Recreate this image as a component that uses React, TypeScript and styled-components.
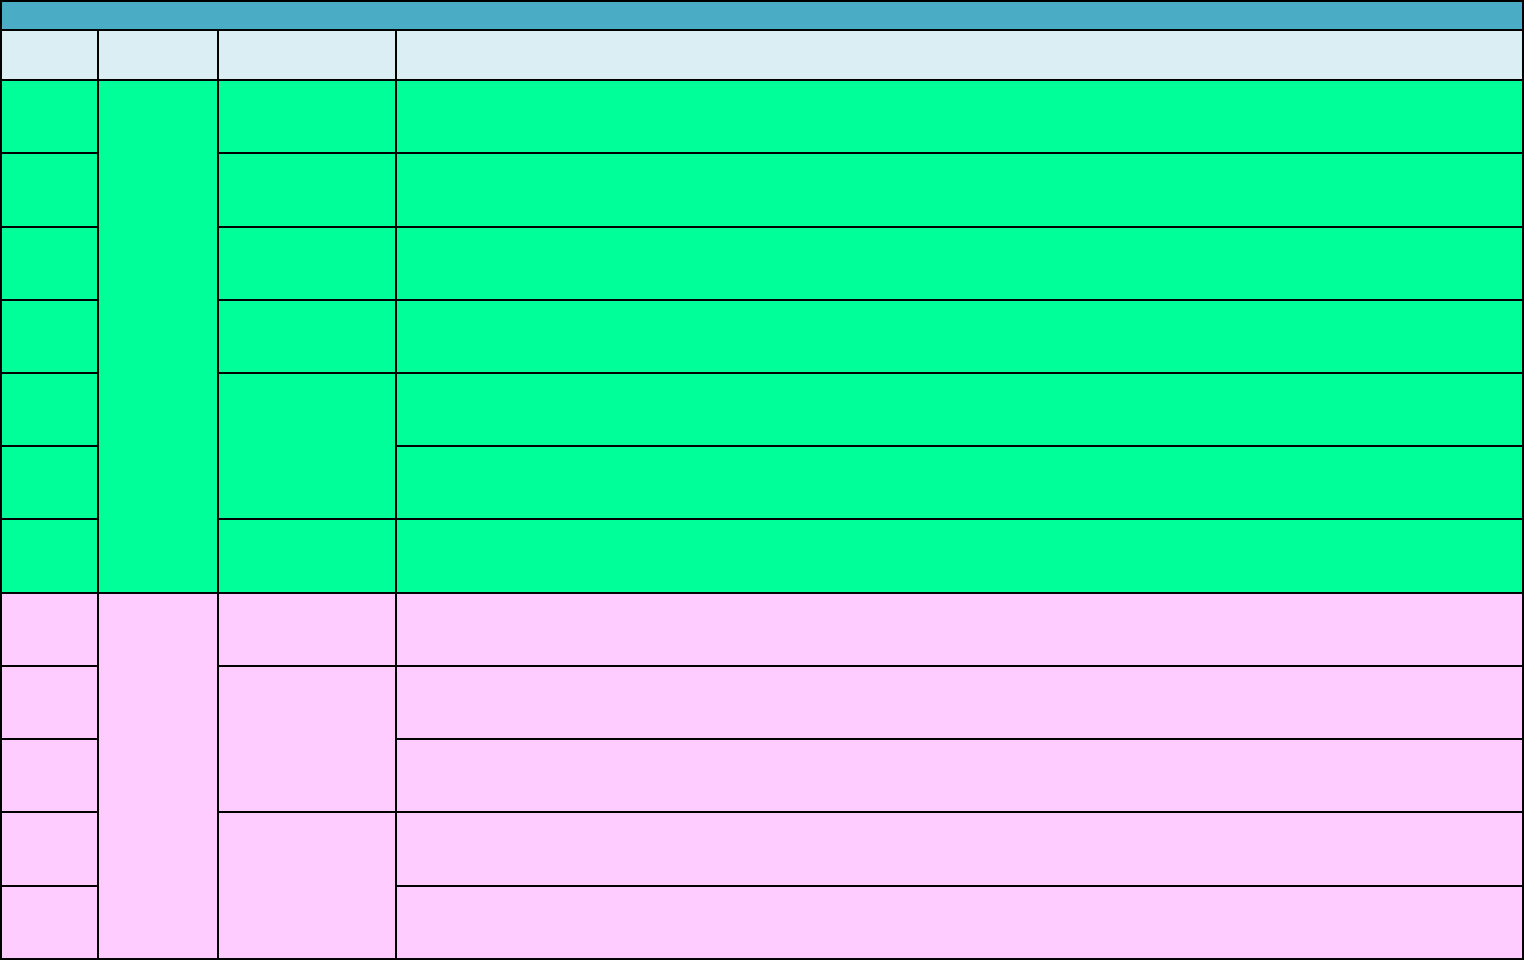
import React from "react";
import styled, { createGlobalStyle } from "styled-components";

const GlobalStyle = createGlobalStyle`
  html, body { margin: 0; padding: 0; background: #ffffff; }
  body { font-family: "Liberation Sans", Arial, sans-serif; }
`;

type Tone = "green" | "pink";

const toneColor: Record<Tone, string> = {
  green: "#00FF99",
  pink: "#FFCCFF",
};

const Sheet = styled.div`
  display: grid;
  grid-template-columns: 95px 118px 176px 1125px;
  grid-template-rows: 27px 48px 71px 72px 71px 71px 71px 71px 72px 71px 71px 71px 72px 71px;
  gap: 2px;
  padding: 2px;
  background: #000000;
  width: 1524px;
  height: 960px;
  box-sizing: border-box;
`;

const TitleBar = styled.div`
  grid-column: 1 / -1;
  background: #4BACC6;
`;

const HeaderCell = styled.div<{ $col: number }>`
  grid-column: ${(p) => p.$col};
  background: #DBEEF3;
`;

const Cell = styled.div<{ $col: number; $tone: Tone; $span?: number }>`
  grid-column: ${(p) => p.$col};
  grid-row: span ${(p) => p.$span ?? 1};
  background: ${(p) => toneColor[p.$tone]};
`;

type Group = {
  tone: Tone;
  rows: number;
  types: number[];
};

const groups: Group[] = [
  { tone: "green", rows: 7, types: [1, 1, 1, 1, 2, 1] },
  { tone: "pink", rows: 5, types: [1, 2, 2] },
];

export default function App() {
  const cells: React.ReactNode[] = [];
  groups.forEach((g, gi) => {
    const typeStarts = new Map<number, number>();
    let r = 0;
    g.types.forEach((span) => {
      typeStarts.set(r, span);
      r += span;
    });
    for (let i = 0; i < g.rows; i++) {
      cells.push(<Cell key={`g${gi}-i${i}`} $col={1} $tone={g.tone} />);
      if (i === 0) {
        cells.push(<Cell key={`g${gi}-grp`} $col={2} $tone={g.tone} $span={g.rows} />);
      }
      const span = typeStarts.get(i);
      if (span !== undefined) {
        cells.push(<Cell key={`g${gi}-t${i}`} $col={3} $tone={g.tone} $span={span} />);
      }
      cells.push(<Cell key={`g${gi}-d${i}`} $col={4} $tone={g.tone} />);
    }
  });

  return (
    <>
      <GlobalStyle />
      <Sheet>
        <TitleBar />
        <HeaderCell $col={1} />
        <HeaderCell $col={2} />
        <HeaderCell $col={3} />
        <HeaderCell $col={4} />
        {cells}
      </Sheet>
    </>
  );
}
